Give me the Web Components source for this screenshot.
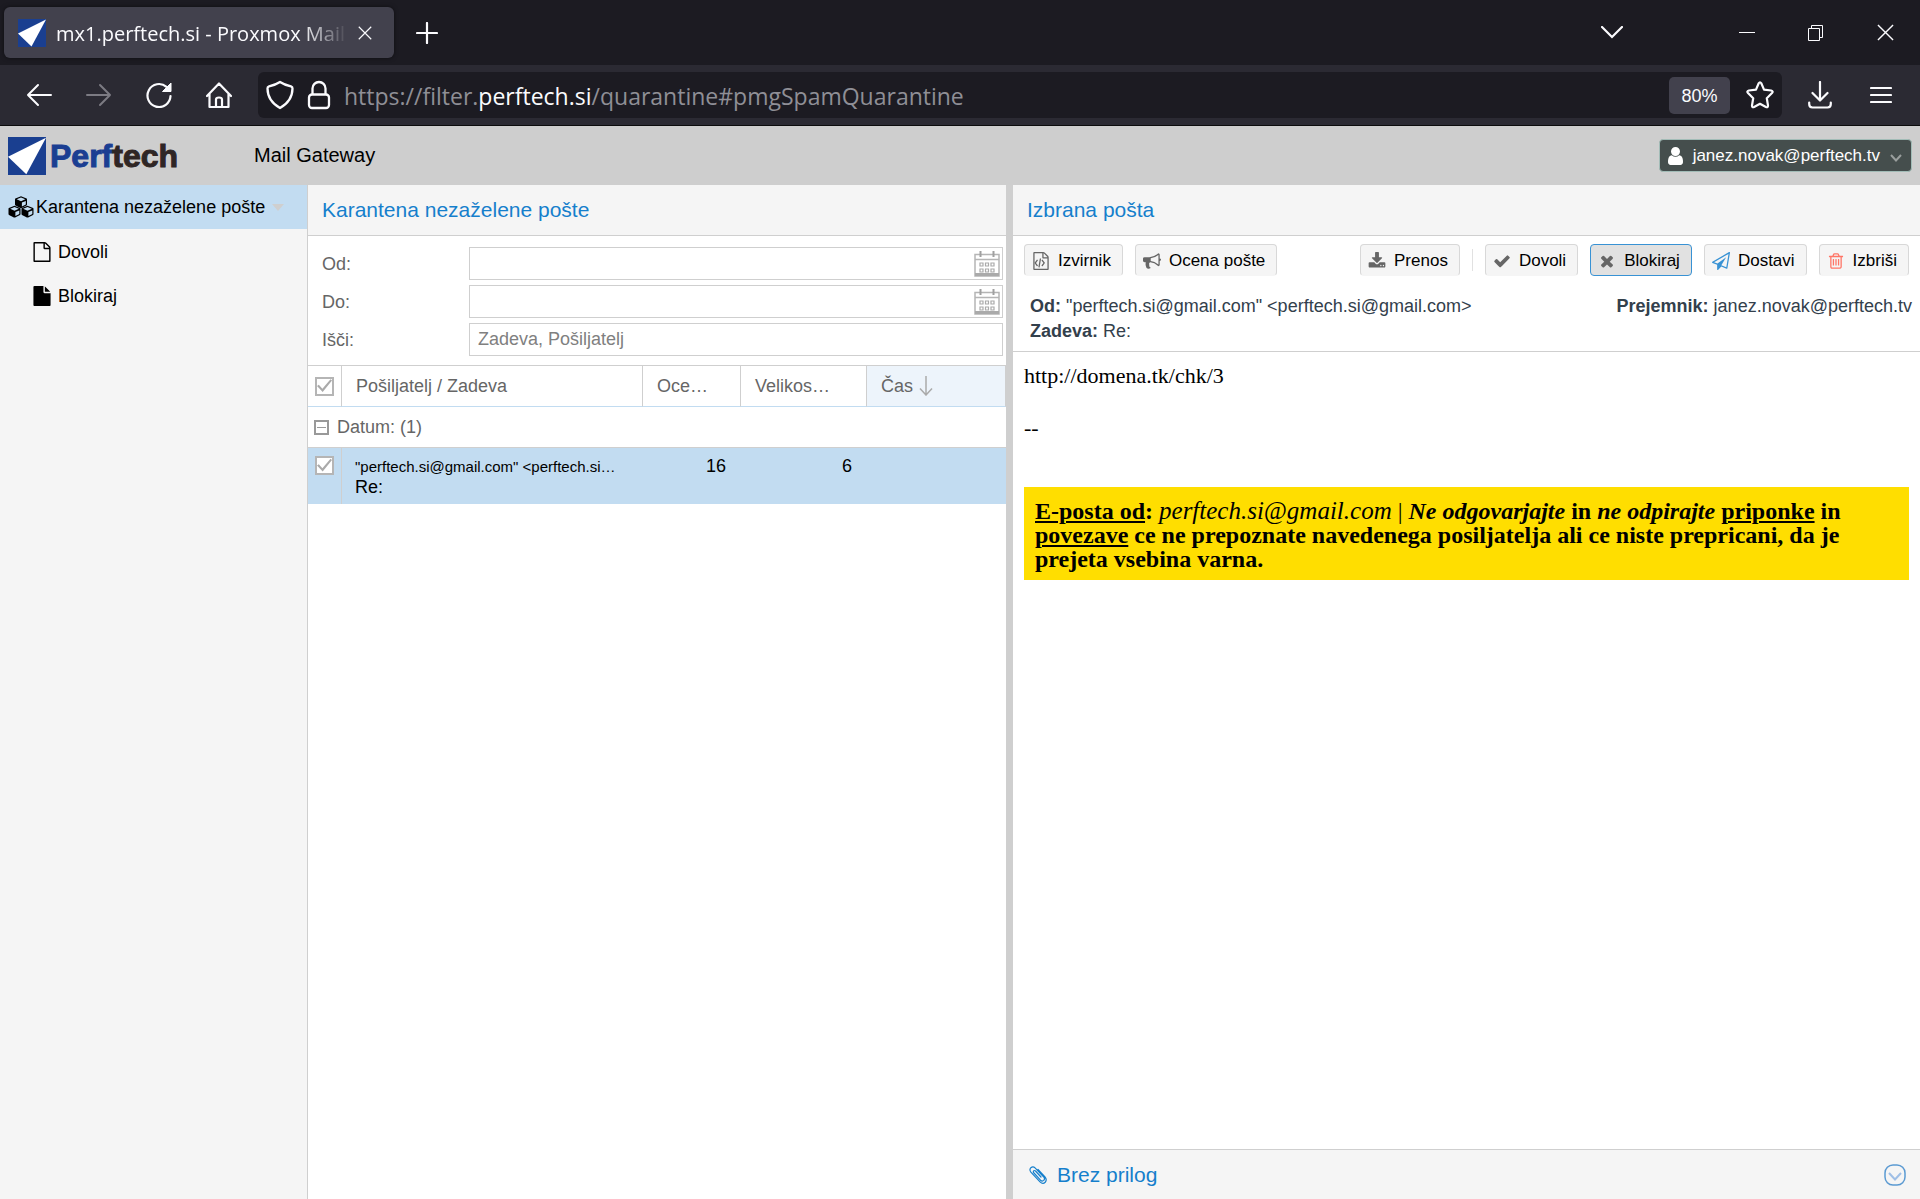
<!DOCTYPE html>
<html lang="sl">
<head>
<meta charset="utf-8">
<title>mx1.perftech.si - Proxmox Mail Gateway</title>
<style>
html,body{height:100%;margin:0}
body{font-family:"Liberation Sans",Arial,sans-serif;font-size:18px;color:#000;overflow:hidden}
</style>
</head>
<body>
<mail-app></mail-app>
<script>
const ICONS = {
  check: ['0 0 1792 1792', '<path d="M1671 566q0 40-28 68l-724 724-136 136q-28 28-68 28t-68-28l-136-136-362-362q-28-28-28-68t28-68l136-136q28-28 68-28t68 28l294 295 656-657q28-28 68-28t68 28l136 136q28 28 28 68z"/>'],
  times: ['0 0 1792 1792', '<path d="M1490 1322q0 40-28 68l-136 136q-28 28-68 28t-68-28l-294-294-294 294q-28 28-68 28t-68-28l-136-136q-28-28-28-68t28-68l294-294-294-294q-28-28-28-68t28-68l136-136q28-28 68-28t68 28l294 294 294-294q28-28 68-28t68 28l136 136q28 28 28 68t-28 68l-294 294 294 294q28 28 28 68z"/>'],
  trash: ['0 0 1792 1792', '<path d="M704 736v576q0 14-9 23t-23 9h-64q-14 0-23-9t-9-23v-576q0-14 9-23t23-9h64q14 0 23 9t9 23zm256 0v576q0 14-9 23t-23 9h-64q-14 0-23-9t-9-23v-576q0-14 9-23t23-9h64q14 0 23 9t9 23zm256 0v576q0 14-9 23t-23 9h-64q-14 0-23-9t-9-23v-576q0-14 9-23t23-9h64q14 0 23 9t9 23zm128 724v-948h-896v948q0 22 7 40.5t14.5 27 10.5 8.5h832q3 0 10.5-8.5t14.5-27 7-40.5zm-672-1076h448l-48-117q-7-9-17-11h-317q-10 2-17 11zm928 32v64q0 14-9 23t-23 9h-96v948q0 83-47 143.5t-113 60.5h-832q-66 0-113-58.5t-47-141.5v-952h-96q-14 0-23-9t-9-23v-64q0-14 9-23t23-9h309l70-167q15-37 54-63t79-26h320q40 0 79 26t54 63l70 167h309q14 0 23 9t9 23z"/>'],
  plane: ['0 0 1792 1792', '<path d="M1764 11q33 24 27 64l-256 1536q-5 29-32 45-14 8-31 8-11 0-24-5l-527-215-298 327q-18 21-47 21-14 0-23-4-19-7-30-23.5t-11-36.5v-452l-472-193q-37-14-40-55-3-39 32-59l1664-960q35-21 68 2zm-342 1499l221-1323-1434 827 336 137 863-639-478 797z"/>'],
  download: ['0 0 1792 1792', '<path d="M1344 1344q0-26-19-45t-45-19-45 19-19 45 19 45 45 19 45-19 19-45zm256 0q0-26-19-45t-45-19-45 19-19 45 19 45 45 19 45-19 19-45zm128-224v320q0 40-28 68t-68 28h-1472q-40 0-68-28t-28-68v-320q0-40 28-68t68-28h465l135 136q58 56 136 56t136-56l136-136h464q40 0 68 28t28 68zm-325-569q17 41-14 70l-448 448q-18 19-45 19t-45-19l-448-448q-31-29-14-70 17-39 59-39h256v-448q0-26 19-45t45-19h256q26 0 45 19t19 45v448h256q42 0 59 39z"/>'],
  bullhorn: ['0 0 1792 1792', '<path d="M1664 640q53 0 90.5 37.5t37.5 90.5-37.5 90.5-90.5 37.5v384q0 52-38 90t-90 38q-417-347-812-380-58 19-91 66t-31 100.5 40 92.5q-20 33-23 65.5t6 58 33.5 55 48 50 61.5 50.5q-29 58-111.5 83t-168.5 11.5-132-55.5q-7-23-29.5-87.5t-32-94.5-23-89-15-101 3.5-98.5 22-110.5h-122q-66 0-113-47t-47-113v-192q0-66 47-113t113-47h480q435 0 896-384 52 0 90 38t38 90v384zm-128 604v-954q-394 302-768 343v270q377 42 768 341z"/>'],
  'file-o': ['0 0 1792 1792', '<path d="M1596 380q28 28 48 76t20 88v1152q0 40-28 68t-68 28h-1344q-40 0-68-28t-28-68v-1600q0-40 28-68t68-28h896q40 0 88 20t76 48zm-444-244v376h376q-10-29-22-41l-313-313q-12-12-41-22zm384 1528v-1024h-416q-40 0-68-28t-28-68v-416h-768v1536h1280z"/>'],
  file: ['0 0 1792 1792', '<path d="M1152 512v-472q22 14 36 28l408 408q14 14 28 36h-472zm-128 32q0 40 28 68t68 28h544v1056q0 40-28 68t-68 28h-1344q-40 0-68-28t-28-68v-1600q0-40 28-68t68-28h800v544z"/>'],
  code: ['0 0 1792 1792', '<path d="M1596 380q28 28 48 76t20 88v1152q0 40-28 68t-68 28h-1344q-40 0-68-28t-28-68v-1600q0-40 28-68t68-28h896q40 0 88 20t76 48zm-444-244v376h376q-10-29-22-41l-313-313q-12-12-41-22zm384 1528v-1024h-416q-40 0-68-28t-28-68v-416h-768v1536h1280z"/><path d="M480 768q8-11 21-12.500t24 6.500l51 38q11 8 12.500 21t-6.500 24l-182 243 182 243q8 11 6.500 24t-12.500 21l-51 38q-11 8-24 6.500t-21-12.500l-226-301q-14-19 0-38zm802 301q14 19 0 38l-226 301q-8 11-21 12.500t-24-6.500l-51-38q-11-8-12.500-21t6.500-24l182-243-182-243q-8-11-6.500-24t12.500-21l51-38q11-8 24-6.500t21 12.500zm-620 461q-13-2-20.500-13t-5.500-24l138-831q2-13 13-20.500t24-5.500l63 10q13 2 20.500 13t5.500 24l-138 831q-2 13-13 20.500t-24 5.500z"/>'],
  user: ['256 128 1280 1536', '<path d="M1536 1399q0 109-62.500 187t-150.500 78h-854q-88 0-150.500-78t-62.500-187q0-85 8.500-160.500t31.500-152 58.500-131 94-89 134.500-34.500q131 128 313 128t313-128q76 0 134.500 34.500t94 89 58.500 131 31.500 152 8.500 160.500zm-256-887q0 159-112.500 271.500t-271.500 112.500-271.500-112.500-112.500-271.500 112.500-271.500 271.500-112.500 271.500 112.500 112.500 271.500z"/>'],
  cubes: ['0 0 26 22', [[7, 0], [0.5, 9.5], [13.5, 9.5]].map(([x, y]) =>
      `<g transform="translate(${x} ${y})"><path d="M6 .3 11.600 2.600Q12 2.900 12 3.400V8.600Q12 9.100 11.500 9.400L6.600 11.900Q6 12.100 5.400 11.900L.5 9.400Q0 9.100 0 8.600V3.400Q0 2.900.4 2.600Z"/><path d="M6 1.500 10.300 3.300 6 5.200 1.700 3.300Z" fill="#c2dcf1"/><path d="M6.900 6.600 10.800 4.900V8.400L6.900 10.400Z" fill="#c2dcf1"/></g>`).join('')],
  clip: ['0 0 18 20', '<path d="M4.500 7.500 11.500 15.200Q13.200 16.800 14.800 15.400 16.200 13.800 14.800 12.200L6.300 3.100Q4 .9 1.900 2.700 0 4.800 1.900 7.200L11 16.900Q13.800 19.600 16.200 17.300 18.300 14.800 16 12L9 4.400M4.500 7.500Q4 6.300 4.800 5.700 5.600 5.200 6.500 6L12 12" fill="none" stroke="currentColor" stroke-width="1.200" stroke-linecap="round"/>'],
  back: ['0 0 26 24', '<path d="M25 12H2M12 2 2 12 12 22" fill="none" stroke="currentColor" stroke-width="2" stroke-linecap="round" stroke-linejoin="round"/>'],
  forward: ['0 0 26 24', '<path d="M1 12H24M14 2 24 12 14 22" fill="none" stroke="currentColor" stroke-width="2" stroke-linecap="round" stroke-linejoin="round"/>'],
  reload: ['0 0 26 26', '<path d="M24.500 14A11.500 11.500 0 1 1 20.500 4.800" fill="none" stroke="currentColor" stroke-width="2.200" stroke-linecap="round"/><path d="M25 1V9.500H16.500Z" stroke="currentColor" stroke-linejoin="round"/>'],
  home: ['1 0 26 28', '<path d="M2 15 14 2.500 26 15M4.500 13V26H23.500V13M11 26V18.500Q11 16.500 14 16.500T17 18.500V26" fill="none" stroke="currentColor" stroke-width="2.200" stroke-linecap="round" stroke-linejoin="round"/>'],
  shield: ['0 0 28 30', '<path d="M14 2Q18.500 5 25 6.300 26.600 6.800 26.500 8.500 26.400 21 14 28 1.600 21 1.500 8.500 1.400 6.800 3 6.300 9.500 5 14 2Z" fill="none" stroke="currentColor" stroke-width="2.300" stroke-linejoin="round"/>'],
  lock: ['0 0 24 30', '<rect x="2" y="14.500" width="20" height="13.500" rx="3" fill="none" stroke="currentColor" stroke-width="2.300"/><path d="M5.500 14V8.500A6.500 6.500 0 0 1 18.500 8.500V14" fill="none" stroke="currentColor" stroke-width="2.300"/>'],
  star: ['0 0 28 28', '<path d="M12.700 2.300Q14 .2 15.300 2.300L18 8.600 25.200 9.500Q27.600 10.200 26 12L20.800 17.200 22 24.500Q22 26.900 19.900 26L14 22.800 8.100 26Q6 26.900 6 24.500L7.200 17.200 2 12Q.4 10.200 2.800 9.500L10 8.600Z" fill="none" stroke="currentColor" stroke-width="2.200" stroke-linejoin="round"/>'],
  save: ['0 0 24 28', '<path d="M12 1V19M4.500 12 12 19.500 19.500 12M1.200 21.500V23Q1.200 26.500 4.500 26.500H19.500Q22.800 26.500 22.800 23V21.500" fill="none" stroke="currentColor" stroke-width="2.200" stroke-linecap="round" stroke-linejoin="round"/>'],
  menu: ['0 0 22 18', '<path d="M1 2H21M1 9H21M1 16H21" fill="none" stroke="currentColor" stroke-width="2.200" stroke-linecap="round"/>'],
  plus: ['0 0 22 22', '<path d="M11 1V21M1 11H21" fill="none" stroke="currentColor" stroke-width="2.200" stroke-linecap="round"/>'],
  cross: ['0 0 18 18', '<path d="M1 1 17 17M17 1 1 17" fill="none" stroke="currentColor" stroke-width="1.500"/>'],
  chevron: ['0 0 22 13', '<path d="M1 1 11 11 21 1" fill="none" stroke="currentColor" stroke-width="2.200" stroke-linecap="round"/>'],
  'chevron-bold': ['0 0 12 8', '<path d="M1 1 6 6.500 11 1" fill="none" stroke="currentColor" stroke-width="2"/>'],
  minimize: ['0 0 16 16', '<path d="M0 7.500H16" fill="none" stroke="currentColor"/>'],
  restore: ['0 0 16 16', '<path d="M.5 3.500H11.500V15.500H.5ZM3.500 3.500V.5H14.500V12.500H11.500" fill="none" stroke="currentColor"/>'],
  calendar: ['0 0 26 26', '<path d="M1 3.500H25V25H1ZM1 8.500H25" fill="none" stroke="#b5b5b5" stroke-width="1.500"/><path d="M1 23.500H25" stroke="#aaa" stroke-width="3"/><path d="M6.500 0V6M19.500 0V6" stroke="#a0a0a0" stroke-width="2"/><g fill="none" stroke="#aaa" stroke-width="1.200"><path d="M6 12H9V15H6ZM11.500 12H14.500V15H11.500ZM17 12H20V15H17ZM6 18H9V21H6ZM11.500 18H14.500V21H11.500ZM17 18H20V21H17Z"/></g>'],
  sort: ['0 0 14 20', '<path d="M7 0V19M1 12.500 7 19 13 12.500" fill="none" stroke="#aaa" stroke-width="1.500"/>'],
  collapse: ['0 0 22 22', '<rect x="1" y="1" width="20" height="20" rx="8" fill="none" stroke="#5b9ad2" stroke-width="1.500"/><path d="M5 9 11 15.500 17 9" fill="none" stroke="#9fbfe6" stroke-width="2"/>'],
  mark: ['0 0 28 28', '<path d="M0 0H28V28H0Z" fill="#1a3f90"/><path d="M28 .5 13.500 27.500 0 14.500Z" fill="#fff"/>']
};

function define(name, css, html) {
  customElements.define(name, class extends HTMLElement {
    constructor() {
      super();
      const t = document.createElement('template');
      t.innerHTML = `<style>*{box-sizing:border-box}button,input{font:inherit;color:inherit}button{cursor:pointer}${css}</style>${typeof html === 'function' ? html(this) : html}`;
      this.attachShadow({mode: 'open'}).append(t.content.cloneNode(true));
    }
  });
}

customElements.define('ui-icon', class extends HTMLElement {
  connectedCallback() {
    if (this.shadowRoot) return;
    const [box, body] = ICONS[this.getAttribute('name')];
    this.attachShadow({mode: 'open'}).innerHTML =
      `<style>:host{display:block;flex:none;width:var(--w,18px);height:var(--h,18px)}svg{display:block;width:100%;height:100%}</style><svg viewBox="${box}" fill="currentColor" aria-hidden="true">${body}</svg>`;
  }
});

define('browser-tabs', `
:host{display:flex;align-items:center;height:65px;background:#1c1b22;color:#fbfbfe;padding:0 26px 0 4px;font:20px/28px "Open Sans","Noto Sans",sans-serif}
.tab{display:flex;align-items:center;width:390px;height:51px;padding:0 22px 0 14px;gap:10px;background:#42414d;border-radius:6px;box-shadow:0 0 4px #0008}
.name{flex:1;padding-top:2px;overflow:hidden;white-space:nowrap;-webkit-mask-image:linear-gradient(to right,#000 84%,transparent);mask-image:linear-gradient(to right,#000 84%,transparent)}
button{display:flex;padding:0;border:0;background:none}
.new{margin-left:22px}
.win{display:flex;align-items:center;margin-left:auto;gap:53px}
.list{margin-right:63px}
`, `
<div class="tab"><ui-icon name="mark" style="--w:28px;--h:28px"></ui-icon><span class="name">mx1.perftech.si - Proxmox Mail Gateway</span>
<button aria-label="Zapri zavihek"><ui-icon name="cross" style="--w:14px;--h:14px"></ui-icon></button></div>
<button class="new" aria-label="Nov zavihek"><ui-icon name="plus" style="--w:22px;--h:22px"></ui-icon></button>
<div class="win">
<button class="list" aria-label="Seznam zavihkov"><ui-icon name="chevron" style="--w:22px;--h:13px"></ui-icon></button>
<button aria-label="Pomanjšaj"><ui-icon name="minimize" style="--w:16px;--h:16px"></ui-icon></button>
<button aria-label="Obnovi"><ui-icon name="restore" style="--w:16px;--h:16px"></ui-icon></button>
<button aria-label="Zapri"><ui-icon name="cross" style="--w:17px;--h:17px"></ui-icon></button>
</div>`);

define('browser-toolbar', `
:host{display:flex;align-items:center;height:61px;background:#2b2a33;color:#fbfbfe;padding:0 28px 0 26px;border-bottom:1px solid #0c0c0d}
button{display:flex;padding:0;border:0;background:none}
nav{display:flex;align-items:center;gap:34px;margin-right:26px}
.fwd{color:#7c7b83}
.url{flex:1;display:flex;align-items:center;height:46px;background:#1c1b22;border-radius:6px;padding:0 8px;gap:13px}
.addr{flex:1;padding-top:2px;color:#8f8f96;font:23px/30px "Open Sans","Noto Sans",sans-serif;white-space:nowrap}
.addr b{font-weight:400;color:#fbfbfe}
.zoom{height:37px;width:61px;margin-right:3px;padding-top:2px;justify-content:center;align-items:center;border-radius:5px;background:#42414d;font:18px/24px "Liberation Sans",sans-serif}
.end{display:flex;align-items:center;gap:38px;margin-left:26px}
`, `
<nav><button aria-label="Nazaj"><ui-icon name="back" style="--w:26px;--h:24px"></ui-icon></button>
<button class="fwd" aria-label="Naprej"><ui-icon name="forward" style="--w:26px;--h:24px"></ui-icon></button>
<button aria-label="Osveži"><ui-icon name="reload" style="--w:26px;--h:26px"></ui-icon></button>
<button aria-label="Domov"><ui-icon name="home" style="--w:26px;--h:28px"></ui-icon></button></nav>
<div class="url"><ui-icon name="shield" style="--w:28px;--h:30px"></ui-icon><ui-icon name="lock" style="--w:24px;--h:30px"></ui-icon>
<div class="addr">https://filter.<b>perftech.si</b>/quarantine#pmgSpamQuarantine</div>
<button class="zoom">80%</button><button aria-label="Zaznamek"><ui-icon name="star" style="--w:28px;--h:28px"></ui-icon></button></div>
<div class="end"><button aria-label="Prenosi"><ui-icon name="save" style="--w:24px;--h:28px"></ui-icon></button>
<button aria-label="Meni"><ui-icon name="menu" style="--w:22px;--h:18px"></ui-icon></button></div>`);

define('app-header', `
:host{display:flex;align-items:center;height:59px;background:#cecece;padding:0 8px}
.logo{display:flex;align-items:center;gap:4px;width:246px;font:bold 32px/44px "Liberation Sans Narrow","Liberation Sans",sans-serif;color:#1b3e92;-webkit-text-stroke:1px currentColor}
.logo i{font-style:normal;color:#2f2625}
.title{font-size:20px}
.user{display:flex;align-items:center;gap:10px;height:33px;margin-left:auto;padding:1px 9px 0 8px;border:1px solid #a2bcb7;border-radius:4px;background:#454e4d;color:#fff;font-size:17px}
.user .v{color:#9a9f9e;margin-top:3px}
`, `
<div class="logo"><ui-icon name="mark" style="--w:38px;--h:38px"></ui-icon><span>Perf<i>tech</i></span></div>
<span class="title">Mail Gateway</span>
<button class="user"><ui-icon name="user" style="--w:15px;--h:18px"></ui-icon>janez.novak@perftech.tv<ui-icon class="v" name="chevron-bold" style="--w:12px;--h:8px"></ui-icon></button>`);

define('nav-tree', `
:host{display:block;width:308px;flex:none;background:#f5f5f5;border-right:1px solid #cfcfcf}
a{display:flex;align-items:center;height:44px;color:#000;text-decoration:none;padding:2px 0 0 32px;gap:6px}
a.on{background:#c2dcf1;padding:0 0 0 8px;gap:2px}
a.on::after{content:"";margin-left:5px;border:6px solid transparent;border-top:7px solid #cfcfcf;border-bottom:0}
`, `
<nav><a class="on" href="#pmgSpamQuarantine"><ui-icon name="cubes" style="--w:26px;--h:22px"></ui-icon>Karantena nezaželene pošte</a>
<a href="#allow"><ui-icon name="file-o" style="--w:20px;--h:20px"></ui-icon>Dovoli</a>
<a href="#block"><ui-icon name="file" style="--w:20px;--h:20px"></ui-icon>Blokiraj</a></nav>`);

define('panel-title', `
:host{display:flex;align-items:center;height:51px;background:#f5f5f5;border-bottom:1px solid #cfcfcf;padding:0 14px;font-size:21px;color:#157fcc}
h2{font:inherit;margin:0}`, `<h2><slot></slot></h2>`);

define('search-field', `
:host{display:flex;align-items:center;height:33px}
label{width:147px;padding-top:2px;color:#666}
.box{flex:1;display:flex;align-items:center;height:33px;border:1px solid #cfcfcf;background:#fff;padding-right:2px}
input{flex:1;min-width:0;height:31px;border:0;outline:0;background:none;padding:0 8px}
input::placeholder{color:#808080;opacity:1}
button{padding:0;border:0;background:none}
`, el => `<label for="f">${el.getAttribute('label')}</label><div class="box"><input id="f" type="text" placeholder="${el.getAttribute('hint') || ''}">${el.hasAttribute('date') ? '<button type="button" aria-label="Izberi datum"><ui-icon name="calendar" style="--w:26px;--h:26px"></ui-icon></button>' : ''}</div>`);

define('mail-grid', `
:host{display:block}
table{width:100%;border-collapse:separate;border-spacing:0;table-layout:fixed}
th{height:42px;padding:0 0 0 14px;font-weight:400;text-align:left;color:#666;border-top:1px solid #cfcfcf;border-bottom:1px solid #c2dcf1;border-right:1px solid #cfcfcf;overflow:hidden;white-space:nowrap}
th.pick,td.pick{padding:0 0 0 7px}
th.sort{background:#edf4fb}
.s{display:flex;align-items:center;gap:6px}
.group td{height:41px;padding:0 0 0 6px;color:#666;border-bottom:1px solid #cfcfcf}
.g{display:flex;align-items:center;gap:8px}
.g button{width:15px;height:15px;padding:0;border:2px solid #999;background:linear-gradient(#999,#999) center/9px 1px no-repeat #fff}
.row td{height:56px;background:#c2dcf1;padding:8px 15px 0 0;vertical-align:top;line-height:20px}
.row td.pick{border-right:1px solid #cfcfcf;padding:8px 0 0 7px}
.row td.who{padding:9px 15px 0 13px}
.num{text-align:right}
.from{font-size:15px;overflow:hidden;text-overflow:ellipsis;white-space:nowrap}
input{appearance:none;display:block;width:19px;height:19px;margin:0;border:2px solid #b5b5b5;background:#fff}
input::before{content:"";display:block;width:15px;height:15px;background:#aaa;clip-path:polygon(0 50%,12% 42%,36% 68%,90% 5%,100% 14%,38% 90%)}
`, `
<table><colgroup><col style="width:34px"><col><col style="width:98px"><col style="width:126px"><col style="width:139px"></colgroup>
<thead><tr><th class="pick"><input type="checkbox" checked aria-label="Izberi vse"></th><th>Pošiljatelj / Zadeva</th><th>Oce…</th><th>Velikos…</th><th class="sort"><span class="s">Čas<ui-icon name="sort" style="--w:14px;--h:20px"></ui-icon></span></th></tr></thead>
<tbody><tr class="group"><td colspan="5"><span class="g"><button aria-label="Strni skupino"></button>Datum: (1)</span></td></tr>
<tr class="row"><td class="pick"><input type="checkbox" checked aria-label="Izberi sporočilo"></td><td class="who"><div class="from">"perftech.si@gmail.com" &lt;perftech.si…</div>Re:</td><td class="num">16</td><td class="num">6</td><td></td></tr></tbody></table>`);

define('quarantine-list', `
:host{display:block;background:#fff;min-width:0}
form{display:flex;flex-direction:column;gap:5px;padding:11px 3px 9px 14px}
`, `<panel-title>Karantena nezaželene pošte</panel-title>
<form><search-field label="Od:" date></search-field><search-field label="Do:" date></search-field><search-field label="Išči:" hint="Zadeva, Pošiljatelj"></search-field></form>
<mail-grid></mail-grid>`);

define('tool-button', `
:host{display:block}
button{display:flex;align-items:center;gap:8px;height:32px;padding:1px 11px 0 7px;border:1px solid #d8d8d8;border-bottom-color:#f5f5f5;border-radius:4px;background:#f5f5f5;font-size:17px;white-space:nowrap}
:host([pressed]) button{background:#e1e1e1;border-color:#3892d4}
ui-icon{color:var(--tint,#666);--w:18px;--h:20px}
`, el => `<button><ui-icon name="${el.getAttribute('icon')}"></ui-icon><slot></slot></button>`);

define('mail-toolbar', `
:host{display:flex;align-items:center;gap:12px;padding:8px 11px}
.sep{width:1px;height:22px;background:#e1e1e1}
.gap{flex:1}
`, `<tool-button icon="code">Izvirnik</tool-button><tool-button icon="bullhorn">Ocena pošte</tool-button><span class="gap"></span>
<tool-button icon="download">Prenos</tool-button><span class="sep"></span><tool-button icon="check">Dovoli</tool-button><tool-button icon="times" pressed>Blokiraj</tool-button><tool-button icon="plane" style="--tint:#3892d4">Dostavi</tool-button><tool-button icon="trash" style="--tint:#ff7566">Izbriši</tool-button>`);

define('mail-view', `
:host{display:flex;flex-direction:column;background:#fff;min-width:0}
.meta{display:flex;justify-content:space-between;padding:10px 8px 7px 17px;line-height:25px;color:#33404c;border-bottom:1px solid #cfcfcf}
.meta p{margin:0}
.body{flex:1;padding:11px 11px;font:22px/26px "Liberation Serif",serif}
.body p{margin:0 0 26px}
.warn{margin-top:46px;padding:12px 11px 9px;background:#ffde00;font:bold 24px/24px Georgia,"Liberation Serif",serif}
.warn .addr{font-weight:400;font-size:25px}
.foot{display:flex;align-items:center;gap:10px;height:50px;padding:1px 14px 0 16px;border-top:1px solid #cfcfcf;background:#f5f5f5;font-size:21px;color:#157fcc}
.foot button{margin-left:auto;padding:0;border:0;background:none}
`, `<panel-title>Izbrana pošta</panel-title><mail-toolbar></mail-toolbar>
<div class="meta"><div><p><b>Od:</b> "perftech.si@gmail.com" &lt;perftech.si@gmail.com&gt;</p><p><b>Zadeva:</b> Re:</p></div><p><b>Prejemnik:</b> janez.novak@perftech.tv</p></div>
<div class="body"><p>http://domena.tk/chk/3</p><p>--</p>
<div class="warn"><u>E-posta od</u>: <i class="addr">perftech.si@gmail.com</i> <span style="font-weight:400">|</span> <i>Ne odgovarjajte</i> in <i>ne odpirajte</i> <u>priponke</u> in <u>povezave</u> ce ne prepoznate navedenega posiljatelja ali ce niste prepricani, da je prejeta vsebina varna.</div></div>
<div class="foot"><ui-icon name="clip" style="--w:18px;--h:20px"></ui-icon>Brez prilog<button aria-label="Razširi"><ui-icon name="collapse" style="--w:22px;--h:22px"></ui-icon></button></div>`);

define('mail-app', `
:host{display:flex;flex-direction:column;height:100vh}
main{flex:1;display:flex;min-height:0}
quarantine-list{flex:698 1 0}
.split{width:7px;background:#cfcfcf}
mail-view{flex:907 1 0}
`, `<browser-tabs></browser-tabs><browser-toolbar></browser-toolbar><app-header></app-header>
<main><nav-tree></nav-tree><quarantine-list></quarantine-list><div class="split"></div><mail-view></mail-view></main>`);
</script>
</body>
</html>
